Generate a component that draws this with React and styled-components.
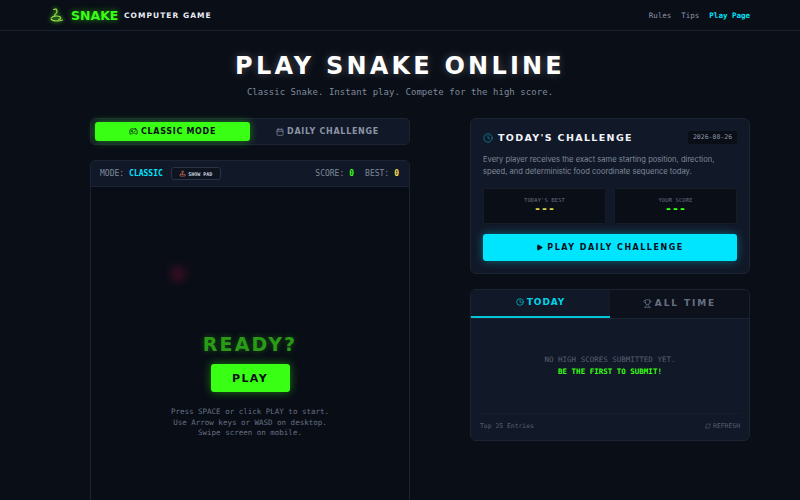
import React from 'react'
import styled, { createGlobalStyle } from 'styled-components'
import { Gamepad2, Calendar, Clock, Trophy, RefreshCw, Play, Joystick } from 'lucide-react'

const pixel = '"DejaVu Sans", sans-serif'
const mono = '"DejaVu Sans Mono", monospace'

const GlobalStyle = createGlobalStyle`
  html, body { margin: 0; padding: 0; height: 500px; overflow: hidden; background: #0a0e17; }
  * { box-sizing: border-box; }
  body { font-family: ${mono}; color: #fff; }
`

const Header = styled.header`
  height: 31px;
  border-bottom: 1px solid #1a212e;
  padding: 0 50px 0 48px;
  display: flex;
  align-items: center;
  justify-content: space-between;
`
const Brand = styled.div`
  display: flex;
  align-items: center;
`
const SnakeWord = styled.span`
  font-family: ${pixel};
  font-weight: 700;
  font-size: 12.5px;
  margin-left: 5px;
  width: 47px;
  color: #39ff14;
  text-shadow: 0 0 6px rgba(57, 255, 20, 0.6);
`
const BrandSub = styled.span`
  font-family: ${pixel};
  font-weight: 700;
  font-size: 7.5px;
  letter-spacing: 1.05px;
  margin-left: 6px;
  color: #e8edf5;
`
const Nav = styled.nav`
  display: flex;
  gap: 10px;
`
const NavLink = styled.a`
  font-size: 7.5px;
  color: ${p => (p.$active ? '#00e5ff' : '#8a94a6')};
  font-weight: ${p => (p.$active ? 700 : 400)};
`
const Hero = styled.section`
  text-align: center;
  padding-top: 21px;
`
const Title = styled.h1`
  margin: 0;
  font-family: ${pixel};
  font-weight: 700;
  font-size: 24px;
  line-height: 28px;
  letter-spacing: 3.2px;
  color: #fff;
  text-shadow: 0 0 8px rgba(255, 255, 255, 0.25);
`
const Subtitle = styled.p`
  margin: 5px 0 0;
  font-size: 9px;
  line-height: 14px;
  letter-spacing: 0.05px;
  color: #7f8a9c;
`
const Columns = styled.main`
  display: grid;
  grid-template-columns: 320px 280px;
  gap: 60px;
  padding: 19px 50px 0 90px;
`
const Column = styled.div`
  display: flex;
  flex-direction: column;
  gap: ${p => p.$gap}px;
`
const ModeTabs = styled.div`
  height: 27px;
  padding: 3px 4px;
  display: grid;
  grid-template-columns: 1fr 1fr;
  background: #111827;
  border: 1px solid #1c2433;
  border-radius: 5px;
`
const ModeTab = styled.button`
  border: 0;
  border-radius: 3px;
  padding: 0;
  display: flex;
  align-items: center;
  justify-content: center;
  gap: 3px;
  font-family: ${pixel};
  font-weight: 700;
  font-size: 8px;
  letter-spacing: 0.7px;
  background: ${p => (p.$active ? '#39ff14' : 'transparent')};
  color: ${p => (p.$active ? '#0a0e17' : '#8a94a6')};
  box-shadow: ${p => (p.$active ? '0 0 8px rgba(57, 255, 20, 0.45)' : 'none')};
`
const Board = styled.section`
  border: 1px solid #1c2433;
  border-radius: 5px;
  overflow: hidden;
  background: #090d16;
`
const BoardBar = styled.div`
  height: 26px;
  padding: 0 10px 0 9px;
  display: flex;
  align-items: center;
  background: #111827;
  border-bottom: 1px solid #1c2433;
  font-size: 8px;
  color: #7f8a9c;
`
const ModeValue = styled.b`
  color: #00e5ff;
  margin-left: 5px;
`
const PadButton = styled.button`
  margin-left: 8px;
  height: 13px;
  width: 50px;
  padding: 0;
  display: flex;
  align-items: center;
  justify-content: center;
  gap: 2px;
  border: 1px solid #2a3345;
  border-radius: 3px;
  background: #0d1420;
  font-family: ${mono};
  font-weight: 700;
  font-size: 5px;
  color: #c7cfdb;
`
const Scores = styled.div`
  margin-left: auto;
  display: flex;
  gap: 11px;
`
const ScoreNum = styled.b`
  margin-left: 5px;
  color: ${p => p.$color};
`
const Arena = styled.div`
  position: relative;
  height: 400px;
  padding-bottom: 2px;
  display: flex;
  flex-direction: column;
  align-items: center;
  justify-content: center;
`
const Food = styled.div`
  position: absolute;
  left: 79px;
  top: 79px;
  width: 16px;
  height: 16px;
  border-radius: 50%;
  background: #7a1235;
  filter: blur(4px);
  opacity: 0.4;
`
const Ready = styled.h2`
  margin: 0;
  font-family: ${pixel};
  font-weight: 700;
  font-size: 19px;
  line-height: 22px;
  letter-spacing: 2.2px;
  color: #2a9a17;
  text-shadow: 0 0 6px rgba(57, 255, 20, 0.3);
`
const PlayButton = styled.button`
  margin-top: 9px;
  width: 79px;
  height: 28px;
  border: 0;
  border-radius: 3px;
  background: #39ff14;
  color: #0a0e17;
  font-family: ${pixel};
  font-weight: 700;
  font-size: 11px;
  letter-spacing: 1.4px;
  box-shadow: 0 0 10px rgba(57, 255, 20, 0.45);
`
const Hint = styled.p`
  margin: 15px 0 0;
  text-align: center;
  font-size: 7.5px;
  line-height: 10.5px;
  color: #667083;
`
const Card = styled.section`
  background: #111827;
  border: 1px solid #1c2433;
  border-radius: 6px;
`
const ChallengeCard = styled(Card)`
  height: 156px;
  padding: 12px 12px 13px 12px;
`
const CardHead = styled.div`
  display: flex;
  align-items: center;
  height: 13px;
`
const CardTitle = styled.h3`
  margin: 0 0 0 5px;
  font-family: ${pixel};
  font-weight: 700;
  font-size: 9.5px;
  letter-spacing: 1.35px;
  color: #f1f4f9;
`
const DateTag = styled.span`
  margin-left: auto;
  height: 13px;
  width: 49px;
  text-align: center;
  border-radius: 2px;
  background: #0a0e17;
  font-size: 6.5px;
  line-height: 13px;
  color: #8a94a6;
`
const Copy = styled.p`
  margin: 10px 0 0;
  font-family: Inter, sans-serif;
  font-size: 7.6px;
  line-height: 12px;
  color: #7f8a9c;
`
const StatRow = styled.div`
  margin-top: 10px;
  display: grid;
  grid-template-columns: 1fr 1fr;
  gap: 8px;
`
const Stat = styled.div`
  height: 36px;
  padding-top: 7px;
  text-align: center;
  background: #0a0e17;
  border: 1px solid #161d2a;
  border-radius: 2px;
`
const StatLabel = styled.div`
  font-size: 5.5px;
  line-height: 8px;
  letter-spacing: 0.1px;
  color: #667083;
`
const StatValue = styled.div`
  font-family: ${mono};
  font-weight: 700;
  font-size: 11.5px;
  line-height: 9px;
  margin-top: 1px;
  letter-spacing: 0;
  color: ${p => p.$color};
`
const ChallengeButton = styled.button`
  margin-top: 10px;
  width: 100%;
  height: 27px;
  border: 0;
  border-radius: 3px;
  display: flex;
  align-items: center;
  justify-content: center;
  gap: 4px;
  background: #00e5ff;
  color: #0a0e17;
  font-family: ${pixel};
  font-weight: 700;
  font-size: 8px;
  letter-spacing: 1.5px;
  box-shadow: 0 0 10px rgba(0, 229, 255, 0.4);
`
const ScoresCard = styled(Card)`
  height: 152px;
  overflow: hidden;
  display: flex;
  flex-direction: column;
`
const ScoreTabs = styled.div`
  height: 29px;
  display: grid;
  grid-template-columns: 139px 1fr;
  background: #0c111b;
  border-bottom: 1px solid #1c2433;
`
const ScoreTab = styled.button`
  padding: 0 0 2px;
  border: 0;
  border-bottom: ${p => (p.$active ? '2px solid #00c4da' : '0')};
  display: flex;
  align-items: center;
  justify-content: center;
  gap: 3px;
  background: ${p => (p.$active ? '#111827' : 'transparent')};
  color: ${p => (p.$active ? '#00d4ea' : '#667083')};
  font-family: ${pixel};
  font-weight: 700;
  font-size: 9px;
  letter-spacing: ${p => (p.$active ? 0.9 : 1.9)}px;
`
const Empty = styled.div`
  flex: 1;
  display: flex;
  flex-direction: column;
  align-items: center;
  justify-content: center;
  font-size: 7.5px;
  line-height: 12px;
  color: #566073;
  padding-bottom: 1px;
`
const FirstLine = styled.b`
  color: #39ff14;
`
const CardFoot = styled.div`
  margin: 0 9px;
  height: 27px;
  padding-bottom: 2px;
  display: flex;
  align-items: center;
  justify-content: space-between;
  border-top: 1px solid #171e2b;
  font-size: 6.4px;
  color: #566073;
`
const Refresh = styled.span`
  display: flex;
  align-items: center;
  gap: 2px;
`

const SnakeLogo = () => (
  <svg width="18" height="18" viewBox="0 0 18 18" fill="none" stroke="#a6d44a" strokeWidth="1.2" strokeLinecap="round" style={{ filter: 'drop-shadow(0 0 2px #39ff14)' }}>
    <path d="M5.5 3.5 L8 3 L9 5 C9.5 7 7 8 6.5 9.5" />
    <path d="M3.5 12 C4.5 10 9 9.5 11.5 10.5 C13.5 11.5 13 13 10.5 13.5" />
    <path d="M3 13 C4 15 10 15.5 14.5 14" />
  </svg>
)

export default function App() {
  return (
    <>
      <GlobalStyle />
      <Header>
        <Brand>
          <SnakeLogo />
          <SnakeWord>SNAKE</SnakeWord>
          <BrandSub>COMPUTER GAME</BrandSub>
        </Brand>
        <Nav>
          <NavLink>Rules</NavLink>
          <NavLink>Tips</NavLink>
          <NavLink $active>Play Page</NavLink>
        </Nav>
      </Header>
      <Hero>
        <Title>PLAY SNAKE ONLINE</Title>
        <Subtitle>Classic Snake. Instant play. Compete for the high score.</Subtitle>
      </Hero>
      <Columns>
        <Column $gap={15}>
          <ModeTabs>
            <ModeTab $active><Gamepad2 size={9} />CLASSIC MODE</ModeTab>
            <ModeTab><Calendar size={8} />DAILY CHALLENGE</ModeTab>
          </ModeTabs>
          <Board>
            <BoardBar>
              MODE:<ModeValue>CLASSIC</ModeValue>
              <PadButton><Joystick size={7} color="#e0705a" />SHOW PAD</PadButton>
              <Scores>
                <span>SCORE:<ScoreNum $color="#39ff14">0</ScoreNum></span>
                <span>BEST:<ScoreNum $color="#ffe14d">0</ScoreNum></span>
              </Scores>
            </BoardBar>
            <Arena>
              <Food />
              <Ready>READY?</Ready>
              <PlayButton>PLAY</PlayButton>
              <Hint>
                Press SPACE or click PLAY to start.<br />
                Use Arrow keys or WASD on desktop.<br />
                Swipe screen on mobile.
              </Hint>
            </Arena>
          </Board>
        </Column>
        <Column $gap={15}>
          <ChallengeCard>
            <CardHead>
              <Clock size={10} color="#0b7f93" />
              <CardTitle>TODAY'S CHALLENGE</CardTitle>
              <DateTag>2026-08-26</DateTag>
            </CardHead>
            <Copy>Every player receives the exact same starting position, direction, speed, and deterministic food coordinate sequence today.</Copy>
            <StatRow>
              <Stat><StatLabel>TODAY'S BEST</StatLabel><StatValue $color="#d8d24a">---</StatValue></Stat>
              <Stat><StatLabel>YOUR SCORE</StatLabel><StatValue $color="#39ff14">---</StatValue></Stat>
            </StatRow>
            <ChallengeButton><Play size={7} fill="#0a0e17" />PLAY DAILY CHALLENGE</ChallengeButton>
          </ChallengeCard>
          <ScoresCard>
            <ScoreTabs>
              <ScoreTab $active><Clock size={8} />TODAY</ScoreTab>
              <ScoreTab><Trophy size={9} />ALL TIME</ScoreTab>
            </ScoreTabs>
            <Empty>
              <span>NO HIGH SCORES SUBMITTED YET.</span>
              <FirstLine>BE THE FIRST TO SUBMIT!</FirstLine>
            </Empty>
            <CardFoot>
              <span>Top 25 Entries</span>
              <Refresh><RefreshCw size={6} />REFRESH</Refresh>
            </CardFoot>
          </ScoresCard>
        </Column>
      </Columns>
    </>
  )
}
